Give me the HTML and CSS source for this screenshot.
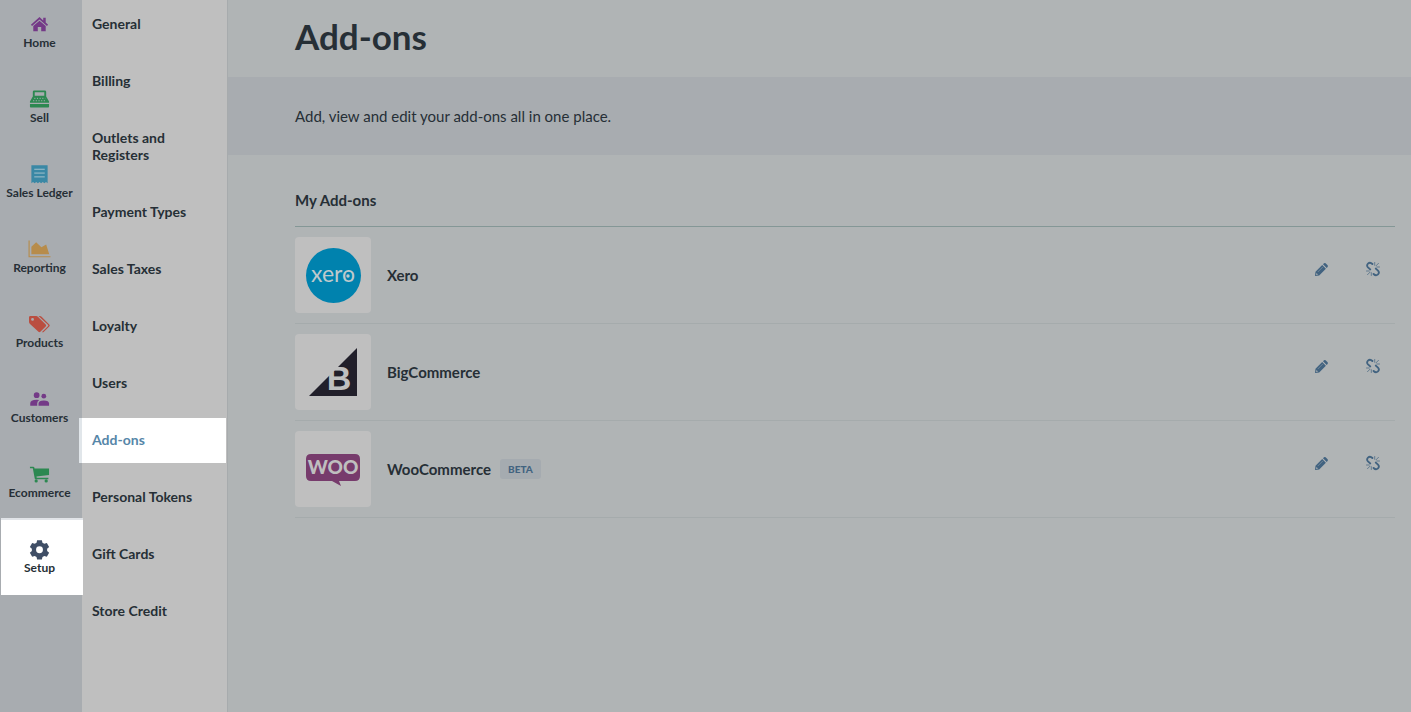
FILE: index.html
```html
<!DOCTYPE html>
<html lang="en">
<head>
<meta charset="utf-8">
<title>Add-ons</title>
<link rel="stylesheet" href="styles.css">
</head>
<body>
<div class="app">
  <nav class="rail" aria-label="Main">
    <a class="rail-link" href="#home">
      <svg class="icon home" viewBox="0 0 22 22"><path d="M11 3.200 2 11.200l1.200 1.300L11 5.700l7.800 6.800 1.200-1.300-2.500-2.200V4h-2.600v2.700z"/><path d="M11 7l-6.500 5.700V18h4.700v-4.500h3.600V18h4.700v-5.300z"/></svg>
      <span>Home</span>
    </a>
    <a class="rail-link" href="#sell">
      <svg class="icon sell" viewBox="0 0 22 22"><path fill-rule="evenodd" d="M4 3Q4 1.500 5.500 1.500h11q1.500 0 1.500 1.500v4.800l3 5.200v1.500H1V13l3-5.200zM6 3.500V7h10V3.500z"/><path d="M1 15.700h20v2.800q0 .8-.8.800H1.800q-.8 0-.8-.8z"/><path class="keys" d="M5.500 9.800h11.500M4.300 12.300h14"/></svg>
      <span>Sell</span>
    </a>
    <a class="rail-link" href="#ledger">
      <svg class="icon ledger" viewBox="0 0 22 22"><path d="M2.500 1.200h17v19l-1.700-1.400-1.700 1.400-1.700-1.400-1.700 1.400-1.700-1.400-1.700 1.400-1.700-1.400-1.700 1.400-1.700-1.400-1.700 1.400z"/><path class="lines" d="M5.500 5.500h11M5.500 9.500h11M5.500 13.500h11"/></svg>
      <span>Sales Ledger</span>
    </a>
    <a class="rail-link" href="#reporting">
      <svg class="icon wide reporting" viewBox="0 0 24 22"><path d="M.5 1.500h1.200v16.500h21.800v1.200H.5z"/><path d="M3.500 16V8l5-4.500 5.500 5.200 5-3L22.200 16z"/></svg>
      <span>Reporting</span>
    </a>
    <a class="rail-link" href="#products">
      <svg class="icon products" viewBox="0 0 22 22"><path fill-rule="evenodd" d="M0 3.500Q0 2 1.500 2h6q1 0 1.800.8l8.200 8.200q1 1 0 2l-5.600 5.600q-1 1-2 0L.8 10.200Q0 9.400 0 8.500zM3.700 4.200a1.500 1.500 0 1 0 0 3 1.500 1.500 0 0 0 0-3z"/><path d="M10 2h1.400q1 0 1.800.8l8 8.200q1 1 0 2l-5.600 5.600q-1 1-2.200.4l6.400-6.200q.8-.8 0-1.600z"/></svg>
      <span>Products</span>
    </a>
    <a class="rail-link" href="#customers">
      <svg class="icon customers" viewBox="0 0 22 22"><circle cx="8" cy="6.500" r="3"/><circle cx="15.500" cy="7.500" r="2.500"/><path d="M1.300 17.500v-2.500q0-3.700 6.700-3.700 1.500 0 2.700.3-2.100 1.300-2.100 3.400v2.500z"/><path d="M10 17.500v-2.200q0-3.300 5.500-3.300t5.500 3.300v2.200z"/></svg>
      <span>Customers</span>
    </a>
    <a class="rail-link" href="#ecommerce">
      <svg class="icon ecommerce" viewBox="0 0 22 22"><path d="M1 2.800h3.500q.8 0 1 .7l.3 1.100h15.200v7l-13.200 1.500.3 1.400h12.200v1.500H7q-1 0-1-.8L4 4.400H1z"/><circle cx="7.500" cy="17.700" r="1.700"/><circle cx="18" cy="17.700" r="1.700"/></svg>
      <span>Ecommerce</span>
    </a>
    <a class="rail-link active" href="#setup" aria-current="true">
      <svg class="icon setup" viewBox="0 0 22 22"><path fill-rule="evenodd" d="M8.500 1.200h5l.6 2.800 1.900 1.100 2.700-.9 2.400 4.200-2.100 1.900v2.200l2.100 1.900-2.400 4.200-2.700-.9-1.900 1.100-.6 2.800h-5l-.6-2.800L6 17.700l-2.700.9L.9 14.400 3 12.500v-2.200L.9 8.400l2.400-4.200 2.700.9L7.900 4zM11 7.600a3.600 3.600 0 1 0 0 7.200 3.600 3.600 0 0 0 0-7.200z"/></svg>
      <span>Setup</span>
    </a>
  </nav>
  <nav class="subnav" aria-label="Setup">
    <a class="sub-link" href="#general">General</a>
    <a class="sub-link" href="#billing">Billing</a>
    <a class="sub-link" href="#outlets">Outlets and Registers</a>
    <a class="sub-link" href="#payments">Payment Types</a>
    <a class="sub-link" href="#taxes">Sales Taxes</a>
    <a class="sub-link" href="#loyalty">Loyalty</a>
    <a class="sub-link" href="#users">Users</a>
    <a class="sub-link active" href="#addons" aria-current="page">Add-ons</a>
    <a class="sub-link" href="#tokens">Personal Tokens</a>
    <a class="sub-link" href="#gift">Gift Cards</a>
    <a class="sub-link" href="#credit">Store Credit</a>
  </nav>
  <main class="content">
    <h1 class="title">Add-ons</h1>
    <p class="intro">Add, view and edit your add-ons all in one place.</p>
    <section class="addons">
      <h2 class="section-title">My Add-ons</h2>
      <ul class="list">
        <li class="row">
          <svg class="tile" viewBox="0 0 76 76" aria-hidden="true"><circle cx="38.500" cy="38.500" r="27.500" fill="#0082ae"/><text class="xero-word" x="38" y="45" text-anchor="middle">xero</text><circle cx="53" cy="39" r="1.700" fill="#bfc9cc"/></svg>
          <span class="name">Xero</span>
          <span class="actions">
            <button class="action" type="button" aria-label="Edit Xero"><svg viewBox="0 0 16 16"><use href="#pencil"/></svg></button>
            <button class="action" type="button" aria-label="Unlink Xero"><svg viewBox="0 0 16 16"><use href="#unlink"/></svg></button>
          </span>
        </li>
        <li class="row">
          <svg class="tile" viewBox="0 0 76 76" aria-hidden="true"><path d="M62 14v48H14z" fill="#211f2a"/><text class="big-word" x="44" y="56" text-anchor="middle">B</text></svg>
          <span class="name">BigCommerce</span>
          <span class="actions">
            <button class="action" type="button" aria-label="Edit BigCommerce"><svg viewBox="0 0 16 16"><use href="#pencil"/></svg></button>
            <button class="action" type="button" aria-label="Unlink BigCommerce"><svg viewBox="0 0 16 16"><use href="#unlink"/></svg></button>
          </span>
        </li>
        <li class="row">
          <svg class="tile" viewBox="0 0 76 76" aria-hidden="true"><path d="M16 23h44q5 0 5 5v17q0 5-5 5H44l2 5-9-5H16q-5 0-5-5V28q0-5 5-5z" fill="#773b6c"/><text class="woo-word" x="38" y="43" text-anchor="middle">WOO</text></svg>
          <span class="name">WooCommerce</span>
          <span class="badge">BETA</span>
          <span class="actions">
            <button class="action" type="button" aria-label="Edit WooCommerce"><svg viewBox="0 0 16 16"><use href="#pencil"/></svg></button>
            <button class="action" type="button" aria-label="Unlink WooCommerce"><svg viewBox="0 0 16 16"><use href="#unlink"/></svg></button>
          </span>
        </li>
      </ul>
    </section>
  </main>
</div>
<svg class="defs" aria-hidden="true">
  <symbol id="pencil" viewBox="0 0 16 16"><path fill="#426380" fill-rule="evenodd" d="M2 15l.5-4.200L9.200 4.100l3.700 3.700-6.700 6.700zM3.500 12l-.4 1.900 1.900-.4zM10 3.300l1-1q.8-.7 1.600 0l2 2q.7.800 0 1.600l-.9 1z"/><path d="M4.800 11l5-5" stroke="#8295a3" stroke-width=".7"/></symbol>
  <symbol id="unlink" viewBox="0 0 16 16"><g fill="none" stroke="#426380" stroke-linecap="round"><path stroke-width="1.900" d="M7.400 3C5.800 1.400 4.200 1.500 3 2.600S1.800 5.200 3 6.400l2.200 2M8.600 13c1.600 1.600 3.200 1.500 4.400.4s1.200-2.600 0-3.800l-2.200-2"/><path stroke-width=".7" d="M9.700 1.500v2.800M13.500 2.300l-2.500 2.500M14.500 6h-2.800M6.300 11.700v2.800M2.500 13.700L5 11.200M1.500 10h2.800"/></g></symbol>
</svg>
</body>
</html>
```
FILE: styles.css
```css
* { box-sizing: border-box; }

body {
  margin: 0;
  background: #b0b4b5;
  color: #262f36;
  font-family: Lato, "Liberation Sans", sans-serif;
}

a { color: inherit; text-decoration: none; }

.app { display: flex; min-height: 100vh; }

.rail {
  flex: 0 0 82px;
  background: #a8acb0;
}

.rail-link {
  display: flex;
  flex-direction: column;
  align-items: center;
  height: 75px;
  padding: 20px 3px 0 0;
  font-size: 12px;
  font-weight: 700;
  line-height: 16px;
  white-space: nowrap;
}

.rail-link:first-child { height: 69px; padding-top: 14px; }

.rail-link.active {
  position: relative;
  z-index: 1;
  height: 77px;
  margin: -1px -1px 0 1px;
  padding: 19px 5px 0 0;
  border-top: 2px solid #e1e4e8;
  background: #fff;
}

.icon { width: 21px; height: 21px; fill: currentColor; }
.icon.wide { width: 23px; }
.rail-link span { color: #262f36; }

.home { color: #743a87; }
.sell { color: #2c8851; }
.ledger { color: #3a88a5; }
.reporting { color: #b78c4b; }
.products { color: #ba4e40; }
.customers { color: #743a87; }
.ecommerce { color: #2c8851; }
.setup { color: #3f4e66; }

.keys { fill: none; stroke: #a8acb0; stroke-width: 1; stroke-dasharray: 1.200 1.600; }
.lines { fill: none; stroke: #a8c3ce; stroke-width: 1; }

.subnav {
  display: flex;
  flex: 0 0 146px;
  flex-direction: column;
  gap: 12px;
  padding: 2px 1px 0 0;
  border-right: 1px solid #a7abad;
  background: #bfbfbf;
}

.sub-link {
  padding: 13px 20px 15px 10px;
  font-size: 14px;
  font-weight: 700;
  line-height: 17px;
}

.sub-link.active {
  position: relative;
  margin-left: -3px;
  border-left: 3px solid #e1e6ea;
  background: #fff;
  color: #5686a8;
}

.content { flex: 1; min-width: 0; }

.title {
  margin: 0;
  padding: 14px 16px 19px 67px;
  font-size: 35px;
  font-weight: 700;
  line-height: 44px;
}

.intro {
  margin: 0;
  padding: 29px 16px 29px 67px;
  background: #a8acb0;
  font-size: 15px;
  line-height: 20px;
}

.addons { padding: 35px 16px 0 67px; }

.section-title {
  margin: 0;
  padding-bottom: 16px;
  border-bottom: 1px solid #849796;
  font-size: 15px;
  font-weight: 700;
  line-height: 20px;
}

.list { margin: 0; padding: 0; list-style: none; }

.row {
  display: flex;
  align-items: center;
  padding: 10px 0;
  border-bottom: 1px solid #a5abac;
}

.tile {
  width: 76px;
  height: 76px;
  border-radius: 4px;
  background: #bfbfbf;
}

.xero-word { fill: #bfc9cc; font-size: 23px; font-weight: 400; }
.big-word { fill: #bfbfbf; font-family: "Liberation Sans", sans-serif; font-size: 34px; font-weight: 700; }
.woo-word { fill: #bfbfbf; font-size: 19px; font-weight: 900; }

.name {
  margin-left: 16px;
  font-size: 15px;
  font-weight: 700;
  line-height: 20px;
}

.badge {
  margin-left: 9px;
  padding: 0 8px;
  border-radius: 3px;
  background: #a5abb0;
  color: #426380;
  font-size: 10px;
  font-weight: 900;
  line-height: 20px;
}

.actions {
  display: flex;
  gap: 20px;
  margin: 0 6px 12px auto;
}

.action {
  display: grid;
  place-items: center;
  width: 32px;
  height: 32px;
  padding: 0;
  border: 0;
  background: none;
}

.action svg { width: 16px; height: 16px; }

.defs { position: absolute; width: 0; height: 0; }
```
